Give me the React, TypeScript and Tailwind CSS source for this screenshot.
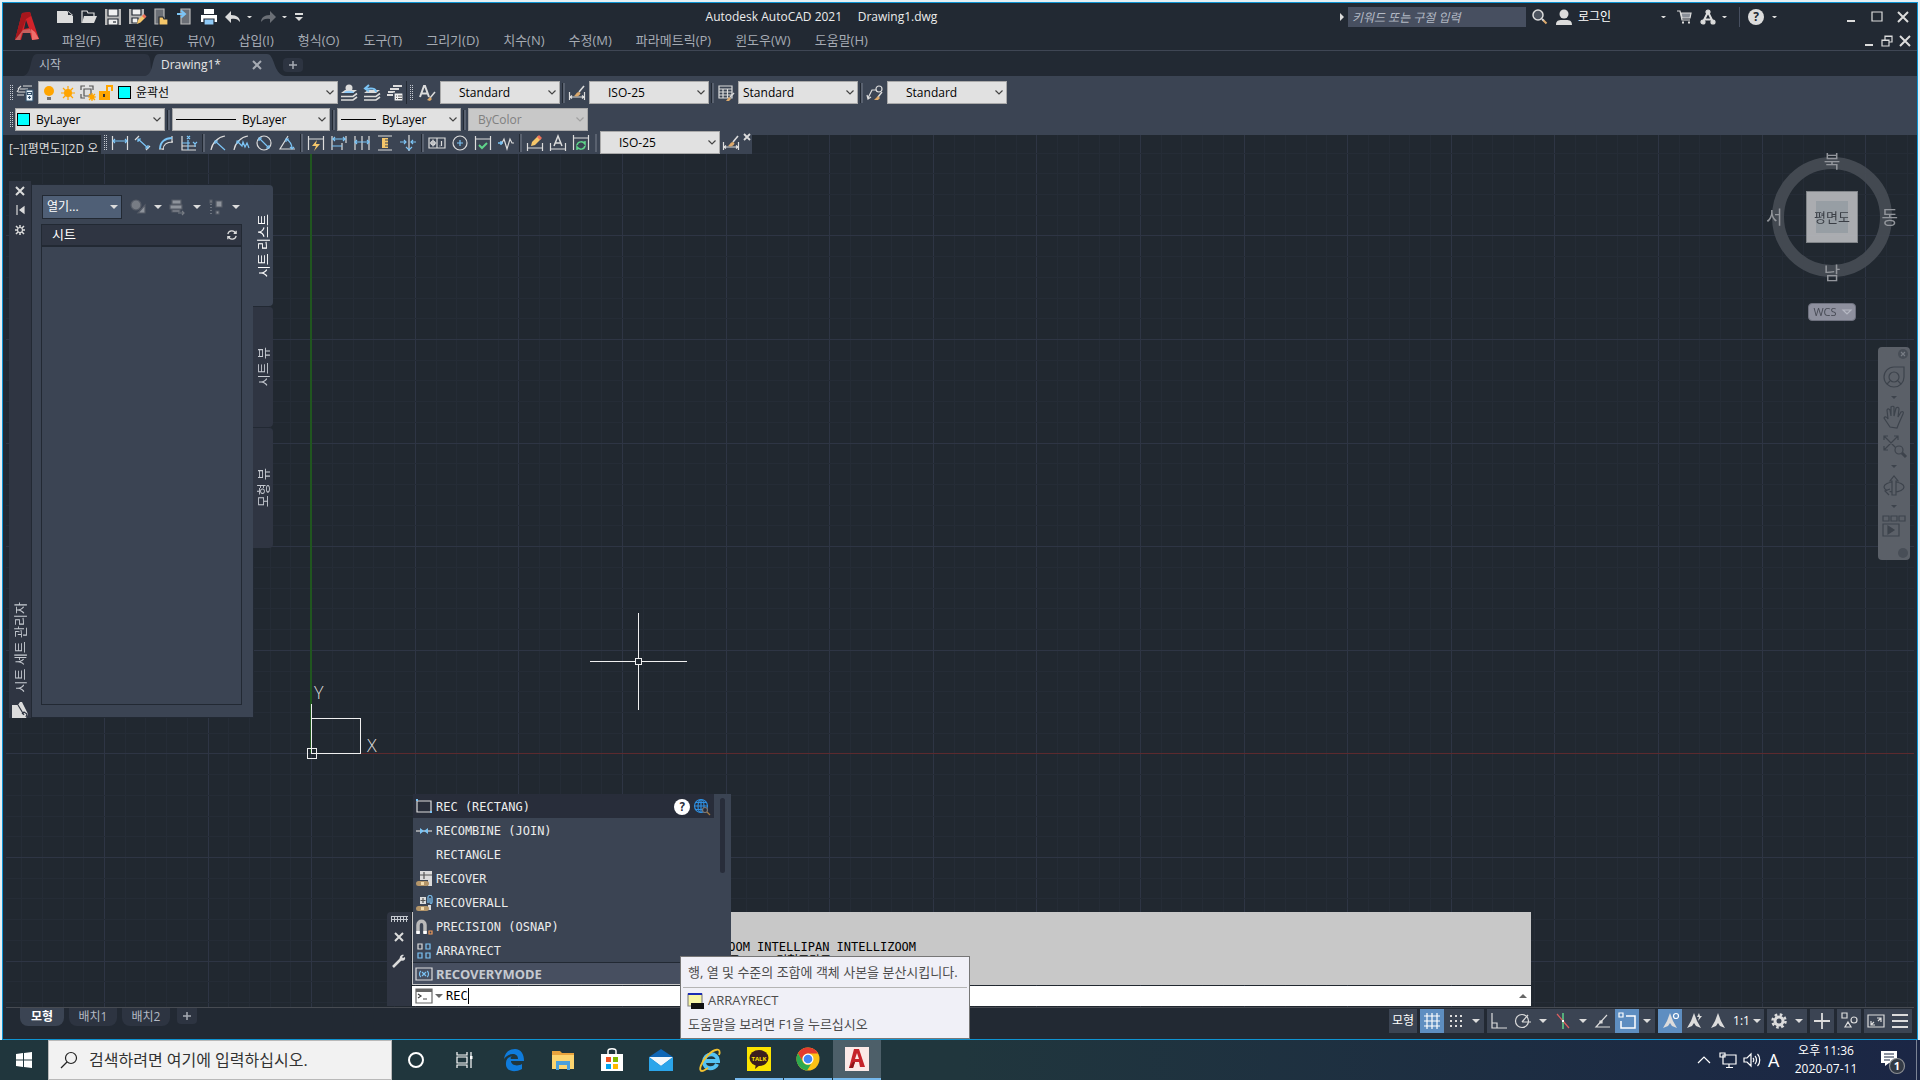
import { useState } from "react";
import type { ReactNode } from "react";

// vertical and horizontal grid lines of model space, relative to the canvas
const lines = (start: number, count: number) =>
  Array.from({ length: count }, (_, i) => ({
    pos: Math.round(start + i * 20.72),
    major: i % 5 === 0,
  }));

const gridX = lines(-5.6, 94);
const gridY = lines(-3.2, 44);

type IconProps = {
  size?: string;
  box?: string;
  children: ReactNode;
};

const Icon = ({ size = "size-4", box = "0 0 16 16", children }: IconProps) => (
  <svg
    viewBox={box}
    className={`${size} shrink-0 overflow-visible`}
    fill="none"
    stroke="#dcdcdc"
    strokeWidth="1.2"
    aria-hidden="true"
  >
    {children}
  </svg>
);

const Caret = ({ size = "w-2" }: { size?: string }) => (
  <svg viewBox="0 0 8 4" className={`${size} shrink-0`} aria-hidden="true">
    <path d="M0 0h8L4 4z" fill="#dcdcdc" />
  </svg>
);

const Grip = () => (
  <span className="w-1 h-4 mx-0.5 shrink-0 bg-[conic-gradient(#c5c9d0_25%,transparent_0)] bg-[length:2px_2px]" />
);

const Sep = () => (
  <span className="w-[3px] h-5 mx-0.5 shrink-0 bg-[#59616f] border-l border-[#222933]" />
);

type ComboProps = {
  label: string;
  value: string;
  width: string;
  pad?: string;
  disabled?: boolean;
  children?: ReactNode;
};

const Combo = ({ label, value, width, pad = "pl-5", disabled, children }: ComboProps) => (
  <div className={`${width} relative h-[23px] shrink-0 flex`}>
    <select
      aria-label={label}
      disabled={disabled}
      className={`${pad} appearance-none w-full h-full text-xs leading-4 border border-[#a9a9a9] opacity-100 ${
        disabled ? "bg-[#c8c8c8] text-[#808080]" : "bg-[#e1e1e1] text-black"
      }`}
    >
      <option>{value}</option>
    </select>
    <div className="absolute inset-y-0 left-1 flex items-center gap-[3px] pointer-events-none">{children}</div>
    <svg viewBox="0 0 8 5" className="absolute right-1 top-[9px] w-2 h-[5px] pointer-events-none" fill="none">
      <path d="M.5 .5L4 4L7.5 .5" stroke={disabled ? "#a0a0a0" : "#444"} strokeWidth="1.2" />
    </svg>
  </div>
);

const Brush = () => (
  <>
    <path d="M15 1l-5 6" strokeWidth="1.6" />
    <path d="M10 7c-3 0-3 3-5 4 3 1 6 0 6.500-3z" fill="#dca96c" stroke="none" />
  </>
);

const dimBrush = (
  <Icon>
    <path d="M.5 7v8M15.500 7v8M1 12h14M3 10.500L1 12l2 1.500M13 10.500l2 1.500-2 1.500" />
    <Brush />
  </Icon>
);

const quickIcons: { name: string; icon: ReactNode }[] = [
  { name: "새로 만들기", icon: <path d="M0 2h10l6 5v7H0z M11 2v4h5z" fill="#dcdcdc" stroke="none" /> },
  {
    name: "열기",
    icon: (
      <>
        <path d="M1 14V2h5l1 2h6v3" />
        <path d="M3 7h13l-3 7H1z" fill="#dcdcdc" stroke="none" />
      </>
    ),
  },
  {
    name: "저장",
    icon: (
      <>
        <path d="M0 0h16v16H0z" fill="#b9b9b9" stroke="none" />
        <path d="M3 0h10v7H3zM3 10h10v6H3z" fill="#f0f0f0" stroke="#222933" />
        <path d="M8 13h3" stroke="#222933" />
      </>
    ),
  },
  {
    name: "다른 이름으로 저장",
    icon: (
      <>
        <path d="M0 0h15v8l-7 7H0z" fill="#b9b9b9" stroke="none" />
        <path d="M3 0h9v6H3zM3 9h6v5H3z" fill="#f0f0f0" stroke="#222933" />
        <path d="M8 15l1-4 5-5 2.500 2.500-5 5z" fill="#f5c66a" stroke="none" />
        <path d="M13 7l2-2 2.500 2.500-2 2z" fill="#f0705a" stroke="none" />
      </>
    ),
  },
  {
    name: "웹 및 모바일에서 열기",
    icon: (
      <>
        <path d="M2 0h9v15H2z" fill="#6b6f76" stroke="#b9b9b9" />
        <path d="M6 8h4l1 2h4v6H6z" fill="#f5c66a" stroke="#222933" />
      </>
    ),
  },
  {
    name: "웹 및 모바일에 저장",
    icon: (
      <>
        <path d="M4 0h9v15H4z" fill="#6b6f76" stroke="#b9b9b9" />
        <path d="M0 5h7M4 1.500L8 5 4 8.500" stroke="#7cc4f5" strokeWidth="2" />
      </>
    ),
  },
  {
    name: "플롯",
    icon: (
      <>
        <path d="M3 0h10v5H3zM0 6h16v7H0z" fill="#fff" stroke="none" />
        <path d="M3 10h10v6H3z" fill="#8fcaf7" stroke="#222933" />
      </>
    ),
  },
];

const menus = [
  "파일(F)",
  "편집(E)",
  "뷰(V)",
  "삽입(I)",
  "형식(O)",
  "도구(T)",
  "그리기(D)",
  "치수(N)",
  "수정(M)",
  "파라메트릭(P)",
  "윈도우(W)",
  "도움말(H)",
];

const Header = () => (
  <header className="flex shrink-0 h-12 border-b border-[#3f4654] bg-[#222933]">
    <button aria-label="응용프로그램 메뉴" className="w-12 flex justify-center pt-2 shrink-0">
      <svg viewBox="0 0 26 30" className="w-[26px] h-[30px]" aria-hidden="true">
        <path d="M8 2l8-1 9 27-7 1-2-7H9l-2 7H1z" fill="#d2232a" />
        <path d="M8 2l8-1 1 4-5 3-5 14-6 7z" fill="#a5161c" />
        <path d="M12 9l3 8-5 1z" fill="#222933" />
        <path d="M9 19l7-1 2 4H8l-2 7H1z" fill="#c5605e" />
        <path d="M17 18l4 3 4 7-7 1z" fill="#ef6d6b" />
      </svg>
    </button>
    <div className="flex-1 flex flex-col pl-1">
      <div className="flex items-center h-[26px] pt-0.5">
        <div className="flex items-center gap-2 pl-0.5">
          {quickIcons.map((q) => (
            <button key={q.name} aria-label={q.name}>
              <Icon>{q.icon}</Icon>
            </button>
          ))}
          <button aria-label="명령 취소" className="flex items-center gap-1.5">
            <Icon>
              <path d="M0 8l6-6v4c6 0 9 3 9 7-2-3-5-4-9-3v4z" fill="#dcdcdc" stroke="none" />
            </Icon>
            <Caret size="w-[5px]" />
          </button>
          <button aria-label="명령 복구" className="flex items-center gap-1.5">
            <Icon>
              <path d="M16 8l-6-6v4c-6 0-9 3-9 7 2-3 5-4 9-3v4z" fill="#6b6f76" stroke="none" />
            </Icon>
            <Caret size="w-[5px]" />
          </button>
          <button aria-label="사용자화" className="w-2 flex flex-col gap-[2px] border-t-2 border-[#dcdcdc] pt-[2px]">
            <Caret />
          </button>
        </div>
        <h1 className="flex-1 text-center text-xs text-[#ececec] whitespace-pre">
          Autodesk AutoCAD 2021{"     "}Drawing1.dwg
        </h1>
        <div className="flex items-center text-xs">
          <svg viewBox="0 0 4 8" className="w-1 h-2 mr-1" aria-hidden="true">
            <path d="M0 0l4 4-4 4z" fill="#dcdcdc" />
          </svg>
          <input
            aria-label="검색"
            placeholder="키워드 또는 구절 입력"
            className="w-[178px] h-5 px-1 bg-[#474f60] italic placeholder:text-[#b4bac5]"
          />
          <button aria-label="찾기" className="ml-1.5">
            <Icon>
              <circle cx="6" cy="6" r="5" fill="#4c535e" strokeWidth="1.5" />
              <path d="M10 10l2 2" strokeWidth="2" />
              <path d="M11.500 11.500l3 3" stroke="#dca96c" strokeWidth="2" />
            </Icon>
          </button>
          <button className="ml-2 flex items-center gap-1.5 text-white">
            <Icon>
              <circle cx="8" cy="5" r="4.500" fill="#dcdcdc" stroke="none" />
              <path d="M0 16c0-6 5-5 8-5s8-1 8 5z" fill="#dcdcdc" stroke="none" />
            </Icon>
            로그인
          </button>
          <span className="w-[50px]" />
          <Caret size="w-[5px]" />
          <button aria-label="앱 스토어" className="ml-2.5">
            <Icon>
              <path d="M1 2h3l2 9h8" />
              <path d="M5 4h10l-1 5H6z" fill="#8a8f98" />
              <path d="M6 13.500h2M12 13.500h2" strokeWidth="2" />
            </Icon>
          </button>
          <button aria-label="Autodesk 연결" className="ml-2 mr-1 flex items-center gap-1.5">
            <Icon>
              <path d="M8 3l5 10M8 3L3 13M5 10.500h6" strokeWidth="2" />
              <circle cx="8" cy="3" r="2" fill="#dcdcdc" />
              <circle cx="3" cy="13" r="2" fill="#dcdcdc" />
              <circle cx="13" cy="13" r="2" fill="#dcdcdc" />
            </Icon>
            <Caret size="w-[5px]" />
          </button>
          <span className="w-px h-5 bg-[#474f60] mx-2" />
          <button aria-label="도움말" className="flex items-center gap-2">
            <span className="size-4 rounded-full bg-[#dcdcdc] text-[#222933] font-bold text-center leading-4">?</span>
            <Caret size="w-[5px]" />
          </button>
          <div className="flex items-center gap-3.5 ml-[68px] mr-2">
            <button aria-label="최소화">
              <Icon size="size-3" box="0 0 12 12">
                <path d="M2 10h8" strokeWidth="2" />
              </Icon>
            </button>
            <button aria-label="최대화">
              <Icon size="size-3" box="0 0 12 12">
                <path d="M1 1h10v9H1z" />
              </Icon>
            </button>
            <button aria-label="닫기">
              <Icon size="size-3" box="0 0 12 12">
                <path d="M1 1l10 10M11 1L1 11" strokeWidth="2" />
              </Icon>
            </button>
          </div>
        </div>
      </div>
      <nav className="flex items-center gap-6 h-[21px] pt-0.5 pl-[7px] text-[13px] text-[#a6abb3]">
        {menus.map((m) => (
          <button key={m}>{m}</button>
        ))}
        <div className="flex items-center gap-1.5 ml-auto mr-1.5">
          <button aria-label="도면 최소화">
            <Icon size="size-3" box="0 0 12 12">
              <path d="M2 10h8" strokeWidth="2" />
            </Icon>
          </button>
          <button aria-label="도면 복원">
            <Icon size="size-3" box="0 0 12 12">
              <path d="M1 5h7v6H1zM4 5V1h7v6H8M1 5.500h7M4 1.500h7" />
            </Icon>
          </button>
          <button aria-label="도면 닫기">
            <Icon size="size-3" box="0 0 12 12">
              <path d="M1 1l10 10M11 1L1 11" strokeWidth="2" />
            </Icon>
          </button>
        </div>
      </nav>
    </div>
  </header>
);

const FileTabs = () => (
  <div className="flex items-end h-[25px] shrink-0 pl-5 bg-[#222933] text-xs">
    <div className="relative w-[130px] h-[22px] pl-4 flex items-center text-[#b4bac5]">
      <svg viewBox="0 0 130 22" className="absolute inset-0 w-full h-full" aria-hidden="true">
        <path d="M0 22C10 20 6 0 14 0H122C130 0 126 14 130 22z" fill="#2d3441" />
      </svg>
      <button className="relative">시작</button>
    </div>
    <div className="relative w-[130px] h-[22px] pl-2 flex items-center text-[#e6e6e6]">
      <svg viewBox="0 0 140 22" className="absolute top-0 -left-2 w-[140px] h-[22px]" aria-hidden="true">
        <path d="M0 22C10 20 6 0 14 0H122C130 0 128 20 140 22z" fill="#3b4453" />
      </svg>
      <button className="relative">Drawing1*</button>
      <button aria-label="탭 닫기" className="relative ml-auto mr-[22px]">
        <Icon size="size-2" box="0 0 8 8">
          <path d="M0 0l8 8M8 0L0 8" strokeWidth="2" stroke="#a6abb3" />
        </Icon>
      </button>
    </div>
    <button aria-label="새 도면" className="w-5 h-3.5 mb-1 rounded bg-[#2d3441] flex items-center justify-center">
      <Icon size="size-2" box="0 0 8 8">
        <path d="M4 0v8M0 4h8" strokeWidth="1.5" stroke="#a6abb3" />
      </Icon>
    </button>
  </div>
);

const Layers = () => (
  <>
    <path d="M4 5h12l-4 3H0z" fill="#dcdcdc" stroke="none" />
    <path d="M0 11.500h12l4-3M0 15h12l4-3" strokeWidth="1.600" />
  </>
);

const Toolbars = () => (
  <div className="shrink-0 bg-[#3b4453] px-1 pt-[5px] pb-1 flex flex-col gap-1">
    <div className="flex items-center h-[23px]">
      <Grip />
      <button aria-label="도면층 특성" className="w-[23px] pl-0.5">
        <Icon>
          <path d="M6 1h9M3 4h8M1 7h8M0 10h7M4 1L1 4M2 4L0 7" />
          <path d="M9 5h7v11H9z" fill="#eaf4fb" stroke="#34506b" />
          <path d="M10.500 7.500h4v2h-4zM12.500 11v3M11 12.500h3" stroke="#34506b" />
        </Icon>
      </button>
      <Combo label="도면층" value="윤곽선" width="w-[300px]" pad="pl-[97px]">
        <Icon>
          <circle cx="7" cy="6" r="5" fill="#ffa500" stroke="none" />
          <path d="M5 12h4v3H5z" fill="#777" stroke="none" />
        </Icon>
        <Icon>
          <circle cx="7" cy="8" r="4" fill="#ffa500" stroke="none" />
          <path d="M7 1v14M0 8h14M2 3l10 10M12 3L2 13" stroke="#ffa500" />
        </Icon>
        <Icon>
          <path d="M1 5V1h4M9 1h4v4M1 9v4h4M4 4h7v7H4z" stroke="#555" />
          <circle cx="12" cy="12" r="2.500" fill="#ffa500" stroke="none" />
          <path d="M12 8v8M8 12h8M9 9l6 6M15 9l-6 6" stroke="#ffa500" />
        </Icon>
        <Icon>
          <path d="M0 6h11v9H0z" fill="#ffa500" stroke="none" />
          <path d="M8 7V1h5v5" stroke="#ffa500" strokeWidth="2" />
          <path d="M5 9v3" stroke="#333" strokeWidth="2" />
        </Icon>
        <span className="size-[13px] bg-[#00ffff] border border-black" />
      </Combo>
      <div className="flex items-center gap-[7px] px-[3px]">
        <button aria-label="객체의 도면층을 현재로">
          <Icon>
            <Layers />
            <circle cx="8" cy="3" r="3.500" fill="#dcdcdc" stroke="none" />
            <path d="M3 8c0-3 10-3 10 0z" fill="#8fcaf7" stroke="none" />
          </Icon>
        </button>
        <button aria-label="이전 도면층">
          <Icon>
            <Layers />
            <path d="M12 7c0-4-5-4-10-3M5 0L1 3.500l4 3" stroke="#7cc4f5" strokeWidth="2" />
          </Icon>
        </button>
        <button aria-label="도면층 상태">
          <Icon>
            <path d="M6 1h9M3 4h9M1 7h7M0 10h6" strokeWidth="1.8" />
            <path d="M7 8h9v8H7z" fill="#f0f0f0" stroke="#3b4453" />
            <path d="M9 11h1M11 11h4M9 13.500h1M11 13.500h4" stroke="#555" />
          </Icon>
        </button>
      </div>
      <span className="w-px h-full bg-[#222933]" />
      <Grip />
      <button aria-label="문자 스타일" className="w-[25px] pl-1">
        <Icon>
          <path d="M1 12L5 1h1l4 11M2.500 8.500h6" strokeWidth="2" />
          <path d="M16 7l-5 6" strokeWidth="1.500" />
          <path d="M8 15l3-3 2 2-2 2z" fill="#dca96c" stroke="none" />
        </Icon>
      </button>
      <Combo label="문자 스타일 목록" value="Standard" width="w-[120px]" pad="pl-[18px]" />
      <Sep />
      <button aria-label="치수 스타일" className="w-[22px] pl-0.5">{dimBrush}</button>
      <Combo label="치수 스타일 목록" value="ISO-25" width="w-[120px]" pad="pl-[18px]" />
      <Sep />
      <button aria-label="테이블 스타일" className="w-[22px] pl-0.5">
        <Icon>
          <path d="M1 1h13v12H1zM1 4h13M1 7h13M1 10h13M5 4v9M9.500 4v9" />
          <path d="M16 8l-4 4" strokeWidth="1.500" />
          <path d="M8 16l3-4 2 2-2 2z" fill="#dca96c" stroke="none" />
        </Icon>
      </button>
      <Combo label="테이블 스타일 목록" value="Standard" width="w-[120px]" pad="pl-1" />
      <Sep />
      <button aria-label="다중 지시선 스타일" className="w-[22px] pl-0.5">
        <Icon>
          <path d="M1 13L5 5h4M0 10l1 4 3-2" />
          <circle cx="12" cy="4" r="3" />
          <path d="M15 7l-4 5" strokeWidth="1.500" />
          <path d="M7 15l4-4 2 2-2 2z" fill="#dca96c" stroke="none" />
        </Icon>
      </button>
      <Combo label="다중 지시선 스타일 목록" value="Standard" width="w-[120px]" pad="pl-[18px]" />
    </div>
    <div className="flex items-center h-[23px]">
      <Grip />
      <Combo label="색상" value="ByLayer" width="w-[150px]" pad="pl-5">
        <span className="size-[13px] -ml-0.5 bg-[#00ffff] border border-black" />
      </Combo>
      <Sep />
      <Combo label="선종류" value="ByLayer" width="w-[158px]" pad="pl-[69px]">
        <span className="w-[60px] h-px bg-black" />
      </Combo>
      <Sep />
      <Combo label="선가중치" value="ByLayer" width="w-[124px]" pad="pl-[44px]">
        <span className="w-[35px] h-px bg-black" />
      </Combo>
      <Sep />
      <Combo label="플롯 스타일" value="ByColor" width="w-[120px]" pad="pl-[9px]" disabled />
    </div>
  </div>
);

const B = "#7cc4f5";

// dimension tools; null is a divider
const dimTools: ({ name: string; icon: ReactNode } | null)[] = [
  { name: "선형", icon: <><path d="M.5 1v14M15.500 1v14" /><path d="M1 6h14M3 4L1 6l2 2M13 4l2 2-2 2" stroke={B} /></> },
  { name: "정렬", icon: <><path d="M0 5l4-4M11 15l4-4" /><path d="M3 4l10 9M3 7V4h3M13 10v3h-3" stroke={B} /></> },
  { name: "호 길이", icon: <><path d="M5 15C5 10 8 7 15 7M1 14h5M14 1v7" /><path d="M2 14C2 7 7 3 14 3" stroke={B} strokeWidth="2" /></> },
  { name: "세로좌표", icon: <><path d="M1 1v14h14M1 11h14" /><path d="M7 5v10M1 8h8M6 1l3 3M9 1L6 4M12 7l2 2 2-2M14 9v3" stroke={B} /></> },
  null,
  { name: "반지름", icon: <><path d="M1 15C2 8 8 2 15 1" /><path d="M5 6l10 9M5 9V6h3" stroke={B} /></> },
  { name: "꺾기", icon: <><path d="M1 15C2 8 8 2 15 1" /><path d="M4 6l5 5 1-4 2 5 2-4 2 5M4 9V6h3" stroke={B} /></> },
  { name: "지름", icon: <><circle cx="8" cy="8" r="7" /><path d="M3 3l10 10M3 6V3h3M13 10v3h-3" stroke={B} /></> },
  { name: "각도", icon: <><path d="M9 1L1 14h15" /><path d="M7 4c4 2 6 5 6 10M7 7V4h3M11 12l2 2 2-2" stroke={B} /></> },
  null,
  { name: "신속", icon: <><path d="M.5 1v14M15.500 1v14M1 4h14" /><path d="M9 5L4 11h4l-2 5 6-7H8z" fill="#f5c66a" stroke="none" /></> },
  { name: "기준선", icon: <><path d="M1 1v14M11 8v7M15 1v7" /><path d="M1 4h14M1 11h10M4 2L2 4l2 2M12 2l2 2-2 2" stroke={B} /></> },
  { name: "계속", icon: <><path d="M1 1v14M8 1v14M15 1v14" /><path d="M1 7h14M3 5L1 7l2 2M13 5l2 2-2 2" stroke={B} /></> },
  { name: "치수 공간", icon: <><path d="M1 1h14M1 15h14" /><path d="M5 3h6v10H5z" fill="#f5c66a" stroke="none" /><path d="M8 5h3M8 8h3M8 11h3" stroke="#3b4453" /></> },
  { name: "치수 끊기", icon: <><path d="M9 0v16" /><path d="M0 7h6M11 7h5M4 5l2 2-2 2M13 5l-2 2 2 2M6 12l3 3 3-3" stroke={B} /></> },
  null,
  { name: "공차", icon: <><path d="M0 3h16v10H0zM8 3v10M12.500 6v5M10.500 11h.8" /><circle cx="4" cy="8" r="2" /><path d="M4 4.500v7M.8 8h6.500" /></> },
  { name: "중심 표식", icon: <><circle cx="8" cy="8" r="7" /><path d="M8 5v6M5 8h6" stroke={B} /></> },
  { name: "검사", icon: <><path d="M.5 1v14M15.500 1v14M1 4h14" /><path d="M4 10l3 3 5-5" stroke="#5fd38a" strokeWidth="2" /></> },
  { name: "꺾기 선형", icon: <><path d="M3 8h1l2-4 3 10 3-10 2 4h2" /><path d="M0 8h5M3 6v4" stroke={B} strokeWidth="1.500" /></> },
  null,
  { name: "치수 편집", icon: <><path d="M.5 8v8M15.500 8v8M1 13h14" /><path d="M4 11l1-4 6-6 3 3-6 6z" fill="#f5c66a" stroke="none" /><path d="M10 2l2-2 3 3-2 2z" fill="#f0705a" stroke="none" /></> },
  { name: "치수 문자 편집", icon: <><path d="M.5 8v8M15.500 8v8M1 14h14" /><path d="M4 11l4-10 4 10M5.500 8h5" strokeWidth="1.500" /></> },
  { name: "치수 업데이트", icon: <><path d="M.5 0v15M15.500 0v15M1 3h14" /><path d="M4 10c1-4 6-4 8-1V6M12 11c-1 4-6 4-8 1v3" stroke="#5fd38a" strokeWidth="1.500" /></> },
];

const DimToolbar = () => (
  <div className="absolute -top-1 left-[95px] z-10 h-[23px] flex items-center bg-[#3b4453]">
    <Grip />
    <div className="flex items-center gap-[7px] pl-[3px]">
      {dimTools.map((t, i) =>
        t ? (
          <button key={t.name} aria-label={t.name}>
            <Icon>{t.icon}</Icon>
          </button>
        ) : (
          <span key={i} className="w-[3px] h-[18px] -mx-0.5 bg-[#59616f] border-l border-[#222933]" />
        )
      )}
    </div>
    <span className="w-0.5 h-[18px] ml-1.5 mr-[3px] bg-[#59616f]" />
    <Combo label="현재 치수 스타일" value="ISO-25" width="w-[120px]" pad="pl-[18px]" />
    <button aria-label="치수 스타일 관리자" className="mx-[3px]">{dimBrush}</button>
    <button aria-label="도구막대 닫기" className="self-start pt-[3px] px-0.5">
      <Icon size="size-1.5" box="0 0 6 6">
        <path d="M0 0l6 6M6 0L0 6" strokeWidth="1.800" />
      </Icon>
    </button>
  </div>
);

const sideTabs = [
  { name: "시트 리스트", style: "bg-[#3b4453] text-white" },
  { name: "시트 뷰", style: "bg-[#2f3542] text-[#c5c9d0] border-t border-[#222933]" },
  { name: "모형 뷰", style: "bg-[#2f3542] text-[#c5c9d0] border-t border-[#222933]" },
];

const SheetPanel = () => (
  <aside className="absolute left-[3px] top-[46px] flex text-[13px]">
    <div className="w-[22px] h-[537px] bg-[#2f3542] flex flex-col items-center pt-1.5">
      <button aria-label="패널 닫기" className="mb-2.5">
        <Icon size="size-2" box="0 0 8 8">
          <path d="M0 0l8 8M8 0L0 8" strokeWidth="2" />
        </Icon>
      </button>
      <button aria-label="자동 숨기기" className="mb-2.5">
        <Icon size="size-2.5" box="0 0 10 10">
          <path d="M2 0v10M9 2v6L5 5z" fill="#dcdcdc" />
        </Icon>
      </button>
      <button aria-label="특성">
        <Icon size="size-2.5" box="0 0 10 10">
          <circle cx="5" cy="5" r="2.500" />
          <path d="M5 0v2M5 8v2M0 5h2M8 5h2M1 1l2 2M7 7l2 2M9 1L7 3M3 7L1 9" strokeWidth="1.500" />
        </Icon>
      </button>
      <span className="mt-auto mb-2.5 text-[#c5c9d0] [writing-mode:vertical-rl] [text-orientation:sideways] rotate-180 leading-4">
        시트 세트 관리자
      </span>
      <Icon>
        <path d="M0 3h6l2-3 2 0 6 12-2 4H0z" fill="#dcdcdc" stroke="none" />
        <path d="M6 3l6 10M10 12l2-2 3 2-1 3" stroke="#2f3542" />
      </Icon>
    </div>
    <div className="w-[223px] h-[534px] mt-[3px] pl-2.5 pt-2.5 pr-3 bg-[#3b4453] border border-[#222933] flex flex-col">
      <div className="flex items-center h-6 mb-[5px]">
        <div className="relative w-20 h-6">
          <select
            aria-label="시트 세트"
            className="appearance-none w-full h-full pl-1 text-xs bg-[#4f5f76] border border-[#222933] text-white"
          >
            <option>열기...</option>
          </select>
          <span className="absolute right-1 top-2.5 pointer-events-none flex">
            <Caret />
          </span>
        </div>
        <div className="flex items-center gap-[7px] ml-2">
          <button aria-label="게시" className="flex items-center gap-2">
            <Icon>
              <circle cx="6" cy="6" r="5" fill="#777c84" stroke="#555b66" />
              <path d="M8 14l7-8v8z" fill="#8e939b" stroke="#555b66" />
            </Icon>
            <Caret />
          </button>
          <button aria-label="시트 게시" className="flex items-center gap-2">
            <Icon>
              <path d="M3 1h9v4H3zM1 6h12v4H1zM3 11h8v2H3z" fill="#8e939b" stroke="#555b66" />
              <path d="M9 14h6M13 12l2 2-2 2" stroke="#777c84" />
            </Icon>
            <Caret />
          </button>
          <button aria-label="시트 선택" className="flex items-center gap-2">
            <Icon>
              <path d="M3 5v11" strokeDasharray="1 2" stroke="#8e939b" />
              <path d="M2 1h2v3H2zM8 2h6v6H8zM8 12h3v3H8z" fill="#8e939b" stroke="#555b66" />
            </Icon>
            <Caret />
          </button>
        </div>
      </div>
      <div className="flex items-center justify-between h-[22px] pl-2.5 pr-1 -mx-px bg-[#2f3542] border border-[#222933] text-white">
        시트
        <button aria-label="새로 고침">
          <Icon size="size-2.5" box="0 0 12 12">
            <path d="M1 5c1-5 8-5 9-1M11 7c-1 5-8 5-9 1M11 1v3H8M1 11V8h3" strokeWidth="1.500" />
          </Icon>
        </button>
      </div>
      <div className="flex-1 mb-3 -mx-px border border-[#222933]" />
    </div>
    <div className="flex flex-col -ml-px mt-1">
      {sideTabs.map((t) => (
        <button key={t.name} className={`${t.style} w-5 h-[121px] flex items-center justify-center rounded-r-sm`}>
          <span className="[writing-mode:vertical-rl] [text-orientation:sideways] rotate-180 leading-4">{t.name}</span>
        </button>
      ))}
    </div>
  </aside>
);

const ViewCube = () => (
  <div className="absolute right-4 top-4 w-[132px] flex flex-col items-center opacity-90">
    <div className="relative size-[132px] grid grid-cols-3 grid-rows-3 items-center justify-items-center text-lg text-[#a0a3a8]">
      <span className="absolute inset-1.5 rounded-full border-[12px] border-[#474d55]" />
      <span className="col-start-2 relative self-start leading-5">북</span>
      <span className="col-start-1 row-start-2 relative justify-self-start">서</span>
      <button
        aria-label="평면도"
        className="col-start-2 row-start-2 relative size-[52px] bg-[#b9bbbe] border border-[#8b8e92] flex items-center justify-center"
      >
        <span className="size-8 bg-[#a4abb1] text-[13px] text-[#3d4148] flex items-center justify-center whitespace-nowrap">
          평면도
        </span>
      </button>
      <span className="col-start-3 row-start-2 relative justify-self-end">동</span>
      <span className="col-start-2 row-start-3 relative self-end leading-5">남</span>
    </div>
    <button className="mt-5 h-[18px] w-12 rounded bg-[#9a9cab] border border-[#777987] text-[11px] leading-4 text-[#4c4f59] flex items-center justify-center gap-1.5">
      WCS
      <Icon size="size-2" box="0 0 8 8">
        <path d="M0 2h8L4 6z" stroke="#c5c7d2" />
      </Icon>
    </button>
  </div>
);

const navTools: { name: string; icon: ReactNode; caret: boolean }[] = [
  { name: "탐색 휠", caret: true, icon: <><path d="M11 1h10v10a10 10 0 1 1-10-10z" /><circle cx="11" cy="11" r="5" /><path d="M7 15l-3 3M15 15l3 3" /></> },
  { name: "초점이동", caret: false, icon: <path d="M7 21L1 12c1-2 3-1 4 1L4 4c1-2 2-1 3 0l1 6V1c1-1 3-1 3 0v9l2-8c1-1 3-1 3 1l-1 8 3-5c2-1 3 0 2 2l-4 9-2 5z" /> },
  { name: "줌", caret: true, icon: <><path d="M1 1l14 14M15 1L1 15M1 5V1h4M11 1h4v4M1 11v4h4" /><circle cx="16" cy="15" r="4" fill="#5b6068" /><path d="M19 18l4 4" strokeWidth="3" /></> },
  { name: "궤도", caret: true, icon: <><ellipse cx="11" cy="12" rx="10" ry="5" /><path d="M9 20V6H7l4-5 4 5h-2v14zM7 14l-5 2 4 4" fill="#5b6068" /></> },
  { name: "ShowMotion", caret: false, icon: <><path d="M0 1h6v5H0zM8 1h6v5H8zM16 1h6v5h-6zM0 9h16v12H0z" /><path d="M5 11v8l6-4z" fill="#3d434c" /></> },
];

const NavBar = () => (
  <div className="absolute right-1 top-[212px] w-8 h-[213px] rounded bg-[#5b6068] flex flex-col items-center">
    <button aria-label="탐색 막대 닫기" className="self-end size-2.5 mr-0.5 mt-0.5 rounded-full bg-[#484e57] flex items-center justify-center">
      <Icon size="size-1.5" box="0 0 6 6">
        <path d="M1 1l4 4M5 1L1 5" stroke="#777c84" />
      </Icon>
    </button>
    <div className="flex-1 flex flex-col items-center gap-[7px] pt-[7px]">
      {navTools.map((t) => (
        <button key={t.name} aria-label={t.name} className="flex flex-col items-center gap-2">
          <svg viewBox="0 0 22 22" className="size-[22px] overflow-visible" fill="none" stroke="#3d434c" strokeWidth="1.200">
            {t.icon}
          </svg>
          {t.caret && (
            <svg viewBox="0 0 6 3" className="w-1.5 h-[3px]">
              <path d="M0 0h6L3 3z" fill="#3d434c" />
            </svg>
          )}
        </button>
      ))}
    </div>
    <span className="self-end size-2.5 mr-0.5 mb-0.5 rounded-full bg-[#484e57]" />
  </div>
);

const suggestions: { text: string; icon: ReactNode }[] = [
  { text: "REC (RECTANG)", icon: <><path d="M1 2h14v11H1z" /><path d="M0 0h2v2H0zM14 12h2v2h-2z" fill={B} stroke="none" /></> },
  { text: "RECOMBINE (JOIN)", icon: <><path d="M0 8h16" /><path d="M4 5l4 3-4 3zM12 5L8 8l4 3z" fill={B} stroke="none" /></> },
  { text: "RECTANGLE", icon: null },
  { text: "RECOVER", icon: <><path d="M4 0h12v15h-4V9H4z" fill="#dcdcdc" stroke="none" /><path d="M8 1v7M4 4h12" stroke="#555" /><rect x="0" y="10" width="13" height="5" rx="2.500" fill="#b59669" stroke="none" /><path d="M5 11h3v3H5z" fill="#f3dcae" stroke="none" /></> },
  { text: "RECOVERALL", icon: <><path d="M4 2h6v7H4zM12 10h3v5h-3z" fill="#dcdcdc" stroke="none" /><path d="M7 3v5M4.500 5.500h5" stroke="#555" /><path d="M12 8V2c0-2 4-2 4 0v5c0 2-2 2-2 0V3" stroke={B} /><rect x="0" y="11" width="13" height="5" rx="2.500" fill="#b59669" stroke="none" /><path d="M5 12h3v3H5z" fill="#f3dcae" stroke="none" /></> },
  { text: "PRECISION (OSNAP)", icon: <><path d="M2 14V6c0-5 7-5 7 0v8" stroke="#b9b9b9" strokeWidth="3.500" /><path d="M.3 12h3.500v3H.3zM7.300 12h3.500v3H7.300z" fill="#fff" stroke="none" /><path d="M13 12h3v3h-3z" stroke="#f09a5a" /></> },
  { text: "ARRAYRECT", icon: <><path d="M2 1h4v5H2z" /><path d="M10 1h4v5h-4zM2 10h4v5H2zM10 10h4v5h-4z" stroke={B} /></> },
];

const CommandLine = () => {
  const [command, setCommand] = useState<string>("REC");

  return (
    <section className="absolute left-[381px] right-[383px] bottom-px h-[94px] flex">
      <div className="w-6 shrink-0 bg-[#2f3542] rounded-tl flex flex-col items-center pt-1 mr-px">
        <span className="w-[17px] h-[6px] mb-2.5 bg-[conic-gradient(#c5c9d0_100%,transparent_0)] [mask-image:conic-gradient(from_90deg_at_1px_1px,transparent_90deg,#000_0)] [mask-size:3px_3px]" />
        <button aria-label="명령행 닫기" className="mb-3">
          <Icon size="size-2.5" box="0 0 10 10">
            <path d="M1 1l8 8M9 1L1 9" strokeWidth="2" />
          </Icon>
        </button>
        <button aria-label="사용자화">
          <Icon size="size-3.5" box="0 0 14 14">
            <path d="M1 13l8-8" strokeWidth="2.500" />
            <path d="M13 3c1 3-2 5-5 3-1-3 1-6 4-5l-2 2 1 1z" fill="#dcdcdc" stroke="none" />
          </Icon>
        </button>
      </div>
      <div className="flex-1 flex flex-col">
        <div className="h-[73px] pl-[309px] pt-7 bg-[#c8c8c8] font-['DejaVu_Sans_Mono','Noto_Sans_CJK_KR',monospace] text-xs leading-[14px] text-black overflow-hidden">
          <p>ZOOM INTELLIPAN INTELLIZOOM</p>
          <p className="pl-2">로 '. '경험프라고'. '. 10</p>
        </div>
        <label className="h-5 mt-px pl-1 pr-1 bg-white flex items-center gap-[3px]">
          <Icon>
            <path d="M0 1h16v14H0z" stroke="#666" />
            <path d="M0 1h16v3H0z" fill="#666" stroke="none" />
            <path d="M2 6l3 2-3 2M7 11h4" stroke="#444" />
          </Icon>
          <svg viewBox="0 0 8 4" className="w-2" aria-hidden="true">
            <path d="M0 0h8L4 4z" fill="#666" />
          </svg>
          <span className="relative flex-1 flex items-center">
            <input
              aria-label="명령"
              value={command}
              onChange={(e) => setCommand(e.target.value)}
              className="w-full font-['DejaVu_Sans_Mono',monospace] text-xs text-black outline-none"
            />
            <span className="absolute left-[22px] w-px h-4 bg-black" />
          </span>
          <svg viewBox="0 0 8 4" className="w-2" aria-hidden="true">
            <path d="M0 4h8L4 0z" fill="#666" />
          </svg>
        </label>
      </div>

      <div className="absolute left-[26px] bottom-[22px] w-[318px] h-[190px] flex flex-col bg-[#3b4453] font-['DejaVu_Sans_Mono',monospace] text-[#ececec]">
        {suggestions.map((s, i) => (
          <button
            key={s.text}
            className={`h-6 shrink-0 pl-[3px] pt-0.5 flex items-center gap-1 text-xs text-left ${
              i === 0 ? "mr-[17px] bg-[#282d3a]" : ""
            }`}
          >
            <Icon>{s.icon}</Icon>
            {s.text}
            {i === 0 && (
              <span className="ml-auto mr-1 flex items-center gap-1">
                <span className="size-4 rounded-full bg-white text-[#282d3a] font-bold text-xs leading-4 text-center">?</span>
                <Icon>
                  <circle cx="7" cy="7" r="6.500" stroke="#2f8fe0" />
                  <path d="M7 0v13M0 7h14M1.500 3.500h11M1.500 10.500h9" stroke="#2f8fe0" />
                  <ellipse cx="7" cy="7" rx="3" ry="6.500" stroke="#2f8fe0" />
                  <circle cx="11" cy="11" r="2.500" fill="#282d3a" stroke="#777" />
                  <path d="M13 13l3 3" stroke="#a5793f" />
                </Icon>
              </span>
            )}
          </button>
        ))}
        <button className="flex-1 pl-[3px] border-t border-[#222933] bg-[#474f60] flex items-center gap-1 font-['Noto_Sans',sans-serif] font-bold text-[13px] leading-5 text-[#c5c9d0]">
          <Icon>
            <path d="M0 2h16v12H0z" />
            <path d="M5 5c-2 1-2 5 0 6M11 5c2 1 2 5 0 6M6 6l4 4M10 6l-4 4" stroke={B} />
          </Icon>
          RECOVERYMODE
        </button>
        <span className="absolute right-1.5 top-1 w-[5px] h-[75px] rounded bg-[#282d3a]" />
      </div>

      <div
        role="tooltip"
        className="absolute left-[293px] -bottom-[33px] z-20 w-[290px] h-[83px] bg-[#f0f0f7] border border-[#767676] text-[13px] text-[#4c4c4c] whitespace-nowrap"
      >
        <p className="h-[30px] leading-[30px] px-[7px]">행, 열 및 수준의 조합에 객체 사본을 분산시킵니다.</p>
        <div className="mx-0.5 pl-[5px] border-t border-[#b4b4b4]">
          <p className="h-[26px] flex items-center gap-1">
            <Icon>
              <path d="M0 1h14v12H0z" fill="#f7f5a5" stroke="#888" />
              <path d="M0 0h14v2H0z" fill="#1a2bb5" stroke="none" />
              <path d="M3 10h13v6H3z" fill="#111" stroke="none" />
            </Icon>
            ARRAYRECT
          </p>
          <p className="leading-5">도움말을 보려면 F1을 누르십시오</p>
        </div>
      </div>
    </section>
  );
};

const Canvas = () => (
  <main className="relative flex-1 ml-[3px] mr-[3px] bg-[#212830]">
    <svg className="absolute inset-0 w-full h-full" shapeRendering="crispEdges" aria-hidden="true">
      {gridX.map((l) => (
        <path key={l.pos} d={`M${l.pos + 0.5} 0v2000`} stroke={l.major ? "#2e3544" : "#252c36"} />
      ))}
      {gridY.map((l) => (
        <path key={l.pos} d={`M0 ${l.pos + 0.5}h3000`} stroke={l.major ? "#2e3544" : "#252c36"} />
      ))}
      <path d="M305 0v618" stroke="#20561f" strokeWidth="2" />
      <path d="M305 618.500h3000" stroke="#5c2a2e" />
      <g fill="none" stroke="#f0f0f0">
        <path d="M305.500 569v50" />
        <path d="M305.500 583.500h49v35h-49zM301.500 613.500h9v10h-9z" />
        <path d="M584 526.500h45M635 526.500h46M632.500 478v45M632.500 530v45M629.500 523.500h6v6h-6z" />
      </g>
    </svg>
    <span className="absolute left-[308px] top-[547px] text-lg leading-5 font-light text-[#dcdcdc]">Y</span>
    <span className="absolute left-[361px] top-[600px] text-lg leading-5 font-light text-[#dcdcdc]">X</span>
    <span className="absolute left-[3px] top-1 w-[92px] overflow-hidden whitespace-nowrap text-xs leading-5 text-[#dcdcdc]">
      [−][평면도][2D 오
    </span>
    <DimToolbar />
    <SheetPanel />
    <ViewCube />
    <NavBar />
    <CommandLine />
  </main>
);

const layoutTabs = [
  { name: "모형", style: "w-11 bg-[#3b4453] text-white font-bold" },
  { name: "배치1", style: "w-12 bg-[#2d3441] text-[#b4bac5]" },
  { name: "배치2", style: "w-12 bg-[#2d3441] text-[#b4bac5]" },
];

type StatusButtonProps = { name: string; active?: boolean; children: ReactNode };

const StatusButton = ({ name, active, children }: StatusButtonProps) => (
  <button
    aria-label={name}
    className={`w-6 h-6 shrink-0 flex items-center justify-center ${active ? "bg-[#5e8ec1]" : ""}`}
  >
    <Icon>{children}</Icon>
  </button>
);

const Drop = () => (
  <span className="w-4 shrink-0 flex justify-center">
    <Caret />
  </span>
);

const Person = () => <path d="M8 0l3 8 4 7-5-2-2-3-2 3-5 2 4-7z" fill="#dcdcdc" stroke="none" />;

const StatusBar = () => (
  <footer className="h-8 shrink-0 mx-[3px] bg-[#222933] border-t border-[#474b52] flex items-start text-xs">
    <div className="flex gap-[5px] pl-[14px]">
      {layoutTabs.map((t) => (
        <button key={t.name} className={`${t.style} h-[18px] leading-4 rounded-b-lg`}>
          {t.name}
        </button>
      ))}
      <button aria-label="새 배치" className="w-5 h-4 ml-0.5 rounded-b bg-[#2d3441] flex items-center justify-center">
        <Icon size="size-2" box="0 0 8 8">
          <path d="M4 0v8M0 4h8" strokeWidth="1.500" stroke="#a6abb3" />
        </Icon>
      </button>
    </div>
    <div className="ml-auto mr-0.5 mt-px flex gap-[3px] text-white [&>div]:bg-[#3b4453] [&>div]:h-6 [&>div]:flex [&>div]:items-center">
      <div className="w-7">
        <button className="w-full whitespace-nowrap">모형</button>
      </div>
      <div>
        <StatusButton name="그리드" active>
          <path d="M0 3h16M0 8h16M0 13h16M3 0v16M8 0v16M13 0v16" stroke="#fff" />
        </StatusButton>
        <StatusButton name="스냅">
          <path d="M2 3h13M2 8h13M2 13h13" strokeWidth="2" strokeDasharray="2 3" />
        </StatusButton>
        <Drop />
      </div>
      <div>
        <StatusButton name="직교">
          <path d="M1 0v15h15M1 10h5v5" />
        </StatusButton>
        <StatusButton name="극좌표">
          <circle cx="7" cy="8" r="6.500" />
          <path d="M7 9h9M7 9l6-7" />
        </StatusButton>
        <Drop />
        <StatusButton name="등각투영">
          <path d="M8 0v16" stroke="#5fd38a" strokeWidth="1.500" />
          <path d="M2 1l12 14" stroke="#e06060" />
          <path d="M7 7h2v2H7z" fill="#fff" stroke="none" />
        </StatusButton>
        <Drop />
        <StatusButton name="객체 스냅 추적">
          <path d="M12 2L1 14h14" />
          <path d="M5 8h2v2H5z" fill="#dcdcdc" />
        </StatusButton>
        <StatusButton name="객체 스냅" active>
          <path d="M7 3h9v12H2V8" stroke="#fff" strokeWidth="1.500" />
          <path d="M0 0h4v4H0z" stroke="#fff" />
        </StatusButton>
        <Drop />
      </div>
      <div>
        <StatusButton name="주석 가시성" active>
          <Person />
          <circle cx="14" cy="3" r="2.500" stroke="#fff" />
        </StatusButton>
        <StatusButton name="자동 축척">
          <Person />
          <path d="M13 0l-2 4h2l-1 4 4-5h-2z" fill="#dcdcdc" stroke="none" />
        </StatusButton>
        <StatusButton name="주석 축척">
          <Person />
        </StatusButton>
        <button className="w-[34px] flex items-center justify-center gap-[3px]">
          1:1
          <Caret />
        </button>
      </div>
      <div>
        <StatusButton name="작업공간">
          <circle cx="8" cy="8" r="4" strokeWidth="3" />
          <circle cx="8" cy="8" r="6.500" strokeWidth="2.500" strokeDasharray="2.600 2.500" />
        </StatusButton>
        <Drop />
      </div>
      <div>
        <StatusButton name="주석 감시">
          <path d="M8 0v16M0 8h16" strokeWidth="1.800" />
        </StatusButton>
      </div>
      <div>
        <StatusButton name="객체 분리">
          <path d="M1 0h5v5H1zM7 9l3 5H4z" />
          <circle cx="13" cy="7" r="3" />
        </StatusButton>
      </div>
      <div>
        <StatusButton name="화면 정리">
          <path d="M0 2h16v12H0zM9 5h4v4M13 5l-3 3M3 8v4h4M3 12l3-3" />
        </StatusButton>
        <StatusButton name="사용자화">
          <path d="M0 2h16M0 8h16M0 14h16" strokeWidth="2" />
        </StatusButton>
      </div>
    </div>
  </footer>
);

const apps: { name: string; icon: ReactNode; style?: string }[] = [
  { name: "Cortana", icon: <circle cx="12" cy="12" r="7" stroke="#fff" strokeWidth="2" /> },
  { name: "작업 보기", icon: <><path d="M4 4v3h10V4M4 20v-3h10v3M4 9h10v6H4zM18 4v16" stroke="#fff" /><path d="M17 8h2.500v3H17z" fill="#fff" stroke="none" /></> },
  { name: "Edge", icon: <path d="M2 11C3 4 8 1 13 1c6 0 9 5 9 12H9c0 4 6 6 11 3v5C11 26 3 22 4 15c0-4 3-6 6-7-1 1-2 2-1 3h7c0-7-10-6-14 0z" fill="#0f7bdb" stroke="none" /> },
  { name: "파일 탐색기", icon: <><path d="M1 3h8l2 2h12v16H1z" fill="#e8a33d" stroke="none" /><path d="M1 7h22v14H1z" fill="#fcd46f" stroke="none" /><path d="M5 13h14v9h-3v-5H8v5H5z" fill="#4aa0dd" stroke="none" /></> },
  { name: "Store", icon: <><path d="M8 6V3c0-3 8-3 8 0v3" stroke="#fff" strokeWidth="1.500" /><path d="M1 6h22v17H1z" fill="#fff" stroke="none" /><path d="M6 9h5v5H6z" fill="#f25022" stroke="none" /><path d="M13 9h5v5h-5z" fill="#7fba00" stroke="none" /><path d="M6 16h5v5H6z" fill="#00a4ef" stroke="none" /><path d="M13 16h5v5h-5z" fill="#ffb900" stroke="none" /></> },
  { name: "메일", icon: <><path d="M0 9L12 1l12 8v14H0z" fill="#0f66b5" stroke="none" /><path d="M0 9h24L12 18z" fill="#f2f7fb" stroke="none" /><path d="M0 9l12 9 12-9v14H0z" fill="#2ba5ea" stroke="none" /></> },
  { name: "Internet Explorer", icon: <><path d="M7 13h13c0-9-14-9-14 1 0 8 11 8 13 2" stroke="#55c3f3" strokeWidth="4" /><path d="M21 7c3-8-5-6-11 0-7 7-10 16-6 16 2 0 4-2 6-3" stroke="#f2c230" strokeWidth="1.800" /></> },
  { name: "카카오톡", style: "border-b-2 border-[#76b9ed]", icon: <><path d="M0 0h24v24H0z" fill="#fbe300" stroke="none" /><ellipse cx="12" cy="11" rx="9.500" ry="8" fill="#3b1e1e" stroke="none" /><path d="M9 17l-1 5 5-4z" fill="#3b1e1e" stroke="none" /><text x="12" y="13.500" textAnchor="middle" fontSize="6" fontWeight="bold" fill="#fbe300" stroke="none">TALK</text></> },
  { name: "Chrome", style: "border-b-2 border-[#76b9ed]", icon: <><circle cx="12" cy="12" r="11.500" fill="#fbc116" stroke="none" /><path d="M2 6.300A11.500 11.500 0 0 1 22 6.500L12 6.500a6 6 0 0 0-5 9z" fill="#e33b2e" stroke="none" /><path d="M2 6.300l5 9c2 3 5 3 8 2l-4 6.200A11.500 11.500 0 0 1 2 6.300z" fill="#2da94f" stroke="none" /><circle cx="12" cy="12" r="5.500" fill="#fff" stroke="none" /><circle cx="12" cy="12" r="4.300" fill="#4285f4" stroke="none" /></> },
  { name: "AutoCAD", style: "border-b-2 border-[#76b9ed] bg-[#4d5f69]", icon: <><path d="M0 0h24v24H0z" fill="#fbe9e7" stroke="none" /><path d="M9 2h5l6 18h-5l-1-5h-4l-2 6H4z" fill="#c5232a" stroke="none" /><path d="M12 6l2 6h-4z" fill="#fbe9e7" stroke="none" /><path d="M10 15l-2 6H4l4-6z" fill="#8d1418" stroke="none" /></> },
];

const Taskbar = () => (
  <div className="h-10 shrink-0 flex bg-linear-to-r from-[#20363d] via-[#20363d] to-[#1b2645]">
    <button aria-label="시작" className="w-12 flex items-center justify-center">
      <Icon>
        <path d="M0 2l7-1v6.500H0zM8 1l8-1v7.500H8zM0 8.500h7V15l-7-1zM8 8.500h8V16l-8-1z" fill="#fff" stroke="none" />
      </Icon>
    </button>
    <label className="w-[344px] flex items-center gap-3 pl-3 bg-[#f2f2f2] border border-[#b9b9b9]">
      <Icon>
        <circle cx="10" cy="6" r="5.500" stroke="#222" />
        <path d="M6 10l-6 6" stroke="#222" />
      </Icon>
      <input
        aria-label="Windows 검색"
        placeholder="검색하려면 여기에 입력하십시오."
        className="flex-1 text-base outline-none placeholder:text-[#333]"
      />
    </label>
    <div className="flex gap-px">
      {apps.map((a) => (
        <button key={a.name} aria-label={a.name} className={`${a.style ?? ""} w-12 flex items-center justify-center`}>
          <Icon size="size-6" box="0 0 24 24">
            {a.icon}
          </Icon>
        </button>
      ))}
    </div>
    <div className="ml-auto flex items-center gap-2 text-white">
      <Icon>
        <path d="M2 11l6-6 6 6" stroke="#fff" />
      </Icon>
      <Icon>
        <path d="M3 3h13v9H3zM9 12v3M6 15.500h7M0 1h5v4H0z" stroke="#fff" />
      </Icon>
      <Icon>
        <path d="M0 6h3l4-4v12l-4-4H0zM9 6c1 1 1 3 0 4M11 4c2 2 2 6 0 8M13.500 2c3 3 3 9 0 12" stroke="#fff" />
      </Icon>
      <span className="text-lg w-3">A</span>
      <p className="w-[76px] text-center text-xs leading-[18px]">
        오후 11:36
        <br />
        2020-07-11
      </p>
      <button aria-label="알림" className="w-8 ml-1 flex justify-center">
        <Icon size="size-6" box="0 0 24 24">
          <path d="M1 3h16v12H9l-4 3v-3H1z" fill="#fff" stroke="none" />
          <path d="M4 6h10M4 9h10M4 12h6" stroke="#1b2845" />
          <circle cx="17" cy="18" r="7.500" fill="#333a45" stroke="#8b8e92" />
          <text x="17" y="22" textAnchor="middle" fontSize="11" fontWeight="bold" fill="#fff" stroke="none">
            1
          </text>
        </Icon>
      </button>
      <span className="w-1 h-full border-l border-[#7b8394]" />
    </div>
  </div>
);

const App = () => {
  return (
    <div className="min-h-screen flex flex-col bg-[#e6f0f5] font-['Open_Sans','Noto_Sans_CJK_KR',sans-serif]">
      <div className="flex-1 flex flex-col mt-0.5 mx-0.5 bg-[#222933] border border-[#0e93d2]">
        <Header />
        <FileTabs />
        <Toolbars />
        <Canvas />
        <StatusBar />
      </div>
      <Taskbar />
    </div>
  );
};

export default App;
